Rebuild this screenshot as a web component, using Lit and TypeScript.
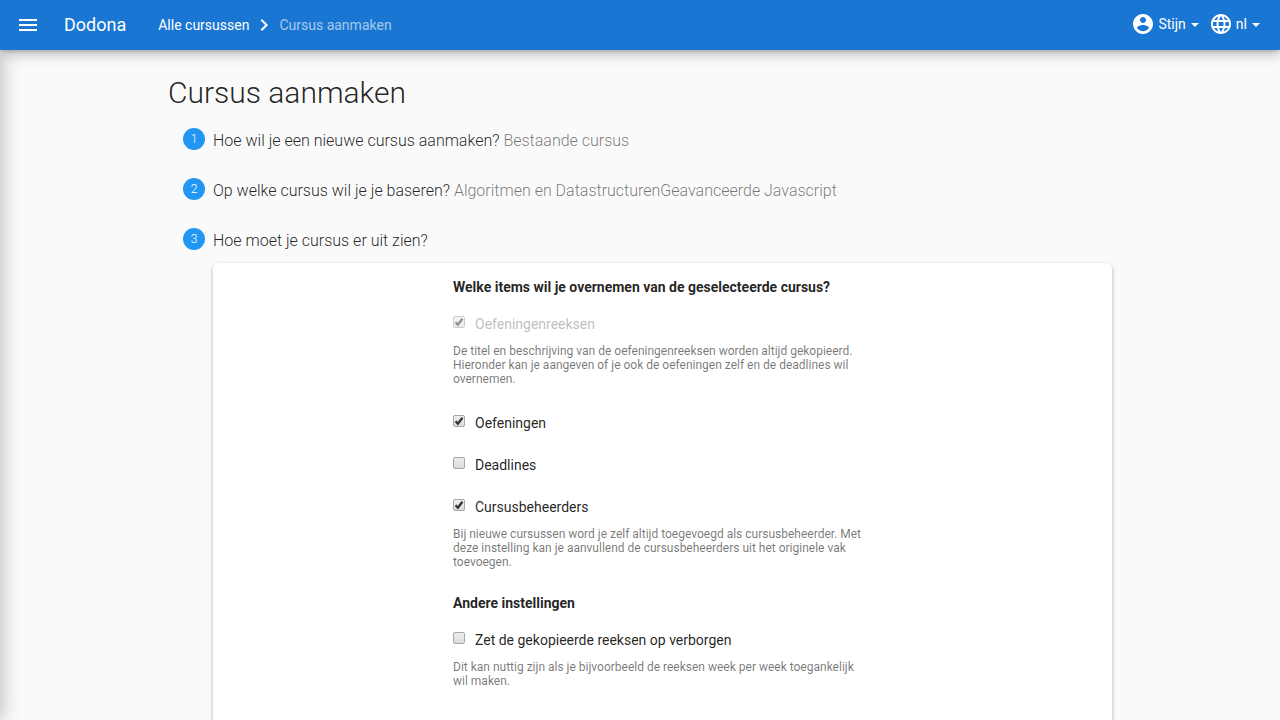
import { LitElement, html, css, nothing } from "lit";
import { customElement, property, state } from "lit/decorators.js";

interface Option {
  id: string;
  label: string;
  checked: boolean;
  disabled?: boolean;
  help?: string;
}

const ITEMS: Option[] = [
  {
    id: "series",
    label: "Oefeningenreeksen",
    checked: true,
    disabled: true,
    help: "De titel en beschrijving van de oefeningenreeksen worden altijd gekopieerd. Hieronder kan je aangeven of je ook de oefeningen zelf en de deadlines wil overnemen.",
  },
  { id: "exercises", label: "Oefeningen", checked: true },
  { id: "deadlines", label: "Deadlines", checked: false },
  {
    id: "admins",
    label: "Cursusbeheerders",
    checked: true,
    help: "Bij nieuwe cursussen word je zelf altijd toegevoegd als cursusbeheerder. Met deze instelling kan je aanvullend de cursusbeheerders uit het originele vak toevoegen.",
  },
];

const SETTINGS: Option[] = [
  {
    id: "hidden",
    label: "Zet de gekopieerde reeksen op verborgen",
    checked: false,
    help: "Dit kan nuttig zijn als je bijvoorbeeld de reeksen week per week toegankelijk wil maken.",
  },
];

@customElement("dodona-navbar")
export class DodonaNavbar extends LitElement {
  static styles = css`
    :host {
      display: block;
      position: relative;
      z-index: 2;
      background: #1976d2;
      color: #fff;
      box-shadow:
        0 2px 4px -1px rgba(0, 0, 0, 0.2),
        0 4px 12px rgba(0, 0, 0, 0.25);
    }
    .bar {
      display: flex;
      align-items: center;
      height: 50px;
      padding: 0 21px 0 16px;
    }
    svg {
      display: block;
      fill: currentColor;
    }
    button {
      display: flex;
      align-items: center;
      padding: 0;
      border: 0;
      background: none;
      color: inherit;
      font: inherit;
      cursor: pointer;
    }
    a {
      color: inherit;
      text-decoration: none;
    }
    .brand {
      margin-left: 24px;
      font-size: 18px;
      line-height: 20px;
    }
    .crumbs {
      display: flex;
      align-items: center;
      flex: 1;
      gap: 3px;
      margin-left: 32px;
    }
    .current {
      opacity: 0.6;
    }
    .menus {
      display: flex;
      gap: 11px;
      padding-bottom: 2px;
    }
    .menu {
      gap: 3px;
    }
    .caret {
      margin-left: 5px;
      margin-top: 2px;
      margin-right: -1px;
      width: 0;
      border-top: 4px solid;
      border-left: 4px solid transparent;
      border-right: 4px solid transparent;
    }
    .label {
      display: flex;
      align-items: center;
    }
  `;

  render() {
    return html`
      <nav class="bar">
        <button aria-label="Menu">
          <svg width="24" height="24" viewBox="0 0 24 24"><path d="M3 6h18v2H3zM3 11h18v2H3zM3 16h18v2H3z" /></svg>
        </button>
        <a class="brand" href="#">Dodona</a>
        <div class="crumbs">
          <a href="#">Alle cursussen</a>
          <svg width="24" height="24" viewBox="0 0 24 24">
            <path d="M8.59 16.58 13.17 12 8.59 7.41 10 6l6 6-6 6z" />
          </svg>
          <span class="current">Cursus aanmaken</span>
        </div>
        <div class="menus">
          <button class="menu" aria-haspopup="true">
            <svg width="24" height="24" viewBox="0 0 24 24">
              <path
                d="M12 2C6.48 2 2 6.48 2 12s4.48 10 10 10 10-4.48 10-10S17.52 2 12 2zm0 3c1.66 0 3 1.34 3 3s-1.34 3-3 3-3-1.34-3-3 1.34-3 3-3zm0 14.2c-2.5 0-4.71-1.28-6-3.22.03-1.99 4-3.08 6-3.08 1.99 0 5.97 1.09 6 3.08-1.29 1.94-3.5 3.22-6 3.22z"
              />
            </svg>
            <span class="label">Stijn<span class="caret"></span></span>
          </button>
          <button class="menu" aria-haspopup="true">
            <svg width="24" height="24" viewBox="0 0 24 24">
              <path
                d="M11.99 2C6.47 2 2 6.48 2 12s4.47 10 9.99 10C17.52 22 22 17.52 22 12S17.52 2 11.99 2zm6.93 6h-2.95c-.32-1.25-.78-2.45-1.38-3.56 1.84.63 3.37 1.91 4.33 3.56zM12 4.04c.83 1.2 1.48 2.53 1.91 3.96h-3.82c.43-1.43 1.08-2.76 1.91-3.96zM4.26 14C4.1 13.36 4 12.69 4 12s.1-1.36.26-2h3.38c-.08.66-.14 1.32-.14 2s.06 1.34.14 2H4.26zm.82 2h2.95c.32 1.25.78 2.45 1.38 3.56-1.84-.63-3.37-1.9-4.33-3.56zm2.95-8H5.08c.96-1.66 2.49-2.93 4.33-3.56C8.81 5.55 8.35 6.75 8.03 8zM12 19.96c-.83-1.2-1.48-2.53-1.91-3.96h3.82c-.43 1.43-1.08 2.76-1.91 3.96zM14.34 14H9.66c-.09-.66-.16-1.32-.16-2s.07-1.35.16-2h4.68c.09.65.16 1.32.16 2s-.07 1.34-.16 2zm.25 5.56c.6-1.11 1.06-2.31 1.38-3.56h2.95c-.96 1.65-2.49 2.93-4.33 3.56zM16.36 14c.08-.66.14-1.32.14-2s-.06-1.34-.14-2h3.38c.16.64.26 1.31.26 2s-.1 1.36-.26 2h-3.38z"
              />
            </svg>
            <span class="label">nl<span class="caret"></span></span>
          </button>
        </div>
      </nav>
    `;
  }
}

@customElement("dodona-step")
export class DodonaStep extends LitElement {
  @property({ type: Number }) number = 1;
  @property() question = "";
  @property() answer = "";

  static styles = css`
    :host {
      display: block;
    }
    .step {
      display: flex;
      gap: 8px;
      padding: 0 0 28px 15px;
    }
    .badge {
      flex: none;
      width: 22px;
      height: 22px;
      border-radius: 50%;
      background: #2196f3;
      color: #fff;
      font-size: 12px;
      font-weight: 300;
      line-height: 22px;
      text-align: center;
    }
    .title {
      margin: 3px 0 0;
      font-size: 16px;
      font-weight: 300;
      line-height: 19px;
    }
    .answer {
      color: rgba(0, 0, 0, 0.54);
    }
  `;

  render() {
    return html`
      <div class="step">
        <span class="badge">${this.number}</span>
        <h2 class="title">
          ${this.question} ${this.answer ? html`<span class="answer">${this.answer}</span>` : nothing}
        </h2>
      </div>
    `;
  }
}

@customElement("dodona-option")
export class DodonaOption extends LitElement {
  @property({ attribute: false }) option!: Option;

  static styles = css`
    :host {
      display: block;
    }
    .row {
      display: flex;
      align-items: flex-start;
      gap: 10px;
      line-height: 20px;
    }
    .row.disabled label {
      opacity: 0.3;
    }
    .box {
      appearance: none;
      flex: none;
      box-sizing: border-box;
      width: 12px;
      height: 12px;
      margin: 2px 0 0;
      border: 1px solid #a6a6a6;
      border-radius: 2px;
      background: linear-gradient(#ededed, #dcdcdc);
    }
    .box:disabled {
      opacity: 0.55;
    }
    .box:checked {
      background:
        url('data:image/svg+xml,<svg xmlns="http://www.w3.org/2000/svg" viewBox="0 0 10 10"><path d="M1.6 5.2 3.9 7.7 8.4 1.8" fill="none" stroke="%23333" stroke-width="2.3"/></svg>')
          center / 10px 10px no-repeat,
        linear-gradient(#ededed, #dcdcdc);
    }
    .help {
      max-width: 412px;
      margin: 10px 0 0;
      color: rgba(0, 0, 0, 0.54);
      font-size: 12px;
      line-height: 14px;
    }
  `;

  render() {
    const o = this.option;
    return html`
      <div class="row ${o.disabled ? "disabled" : ""}">
        <input class="box" type="checkbox" id=${o.id} .checked=${o.checked} ?disabled=${o.disabled} />
        <label for=${o.id}>${o.label}</label>
      </div>
      ${o.help ? html`<p class="help">${o.help}</p>` : nothing}
    `;
  }
}

@customElement("app-root")
export class AppRoot extends LitElement {
  @state() private items = ITEMS;
  @state() private settings = SETTINGS;

  static styles = css`
    :host {
      display: flex;
      flex-direction: column;
      height: 100vh;
      background: #fafafa;
      color: rgba(0, 0, 0, 0.87);
      font: 14px/20px Roboto, sans-serif;
    }
    .body {
      display: flex;
      flex: 1;
      min-height: 0;
      overflow: hidden;
    }
    /* Closed drawer: only its shadow reaches into the page. */
    .drawer {
      position: relative;
      flex: none;
      width: 240px;
      margin-left: -240px;
      box-shadow: 0 0 20px rgba(0, 0, 0, 0.3);
    }
    .scroll {
      flex: 1;
      overflow-y: auto;
    }
    .content {
      box-sizing: border-box;
      max-width: 974px;
      margin: 0 auto;
      padding: 23px 15px;
    }
    .heading {
      margin: 0 0 15px;
      font-size: 30px;
      font-weight: 300;
      line-height: 40px;
    }
    .card {
      display: flex;
      justify-content: center;
      margin: -15px 0 0 45px;
      padding: 14px 15px 60px;
      border-radius: 6px;
      background: #fff;
      box-shadow: 0 2px 4px rgba(0, 0, 0, 0.3);
    }
    .form {
      width: 100%;
      max-width: 419px;
    }
    .group {
      display: flex;
      flex-direction: column;
      gap: 22px;
      margin: 0 0 24px;
      padding: 0;
      border: 0;
    }
    .legend {
      padding: 0;
      margin-bottom: 17px;
      font-weight: 700;
    }
    .first {
      margin-bottom: 5px;
    }
  `;

  private group(title: string, options: Option[]) {
    return html`
      <fieldset class="group">
        <legend class="legend">${title}</legend>
        ${options.map(
          (o, i) =>
            html`<dodona-option class=${i === 0 && o.help ? "first" : ""} .option=${o}></dodona-option>`,
        )}
      </fieldset>
    `;
  }

  render() {
    return html`
      <dodona-navbar></dodona-navbar>
      <div class="body">
        <div class="drawer"></div>
        <main class="scroll">
          <div class="content">
            <h1 class="heading">Cursus aanmaken</h1>
            <dodona-step number="1" question="Hoe wil je een nieuwe cursus aanmaken?" answer="Bestaande cursus"></dodona-step>
            <dodona-step
              number="2"
              question="Op welke cursus wil je je baseren?"
              answer="Algoritmen en DatastructurenGeavanceerde Javascript"
            ></dodona-step>
            <dodona-step number="3" question="Hoe moet je cursus er uit zien?"></dodona-step>
            <section class="card">
              <form class="form">
                ${this.group("Welke items wil je overnemen van de geselecteerde cursus?", this.items)}
                ${this.group("Andere instellingen", this.settings)}
              </form>
            </section>
          </div>
        </main>
      </div>
    `;
  }
}
